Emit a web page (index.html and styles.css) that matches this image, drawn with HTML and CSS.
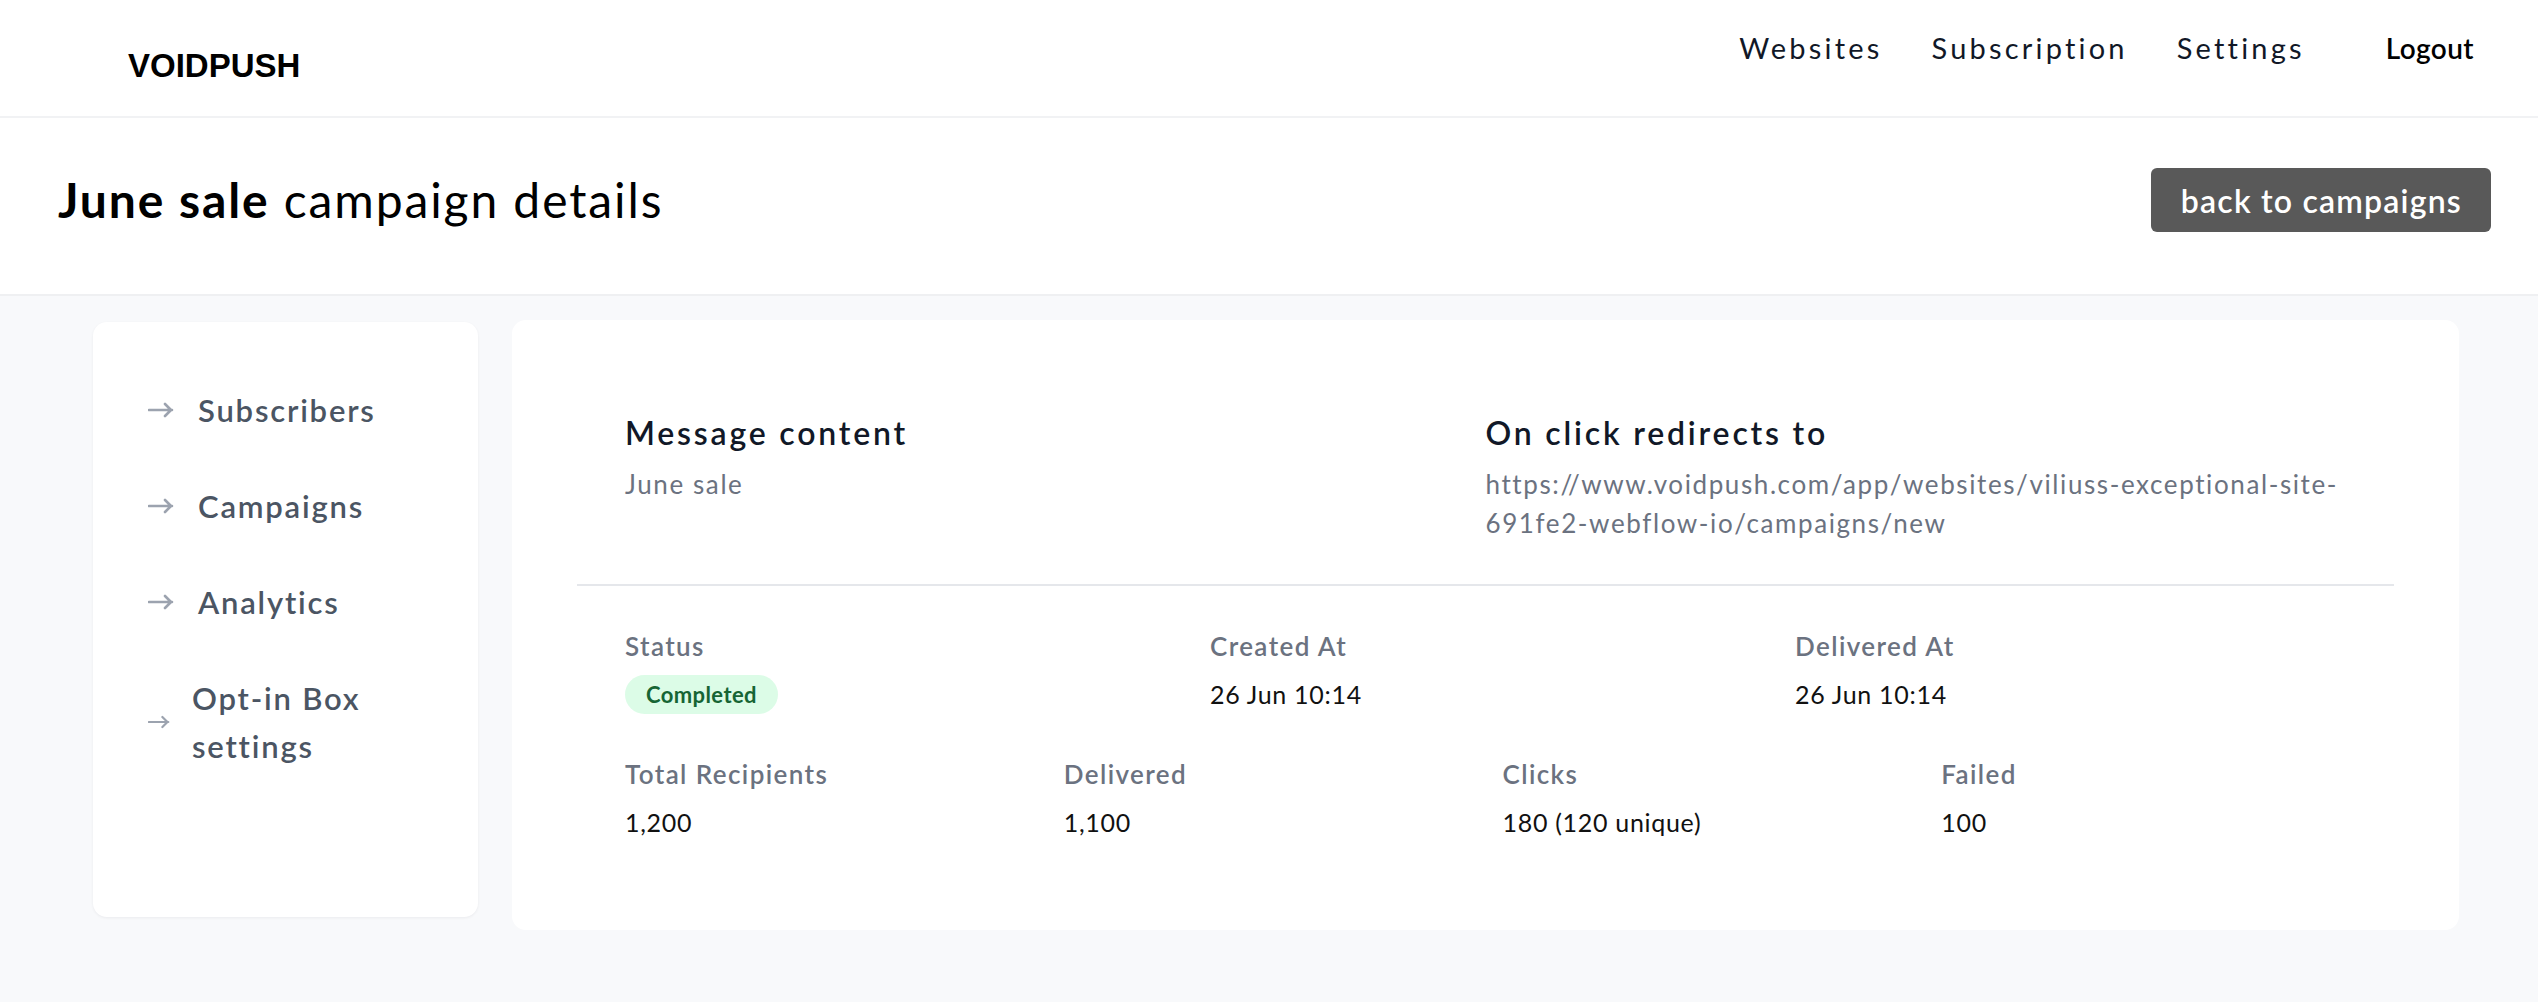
FILE: index.html
```html
<!DOCTYPE html>
<html lang="en">
<head>
<meta charset="utf-8">
<title>June sale campaign details - VOIDPUSH</title>
<link rel="stylesheet" href="styles.css">
</head>
<body>
<header class="topbar">
  <div class="logo">VOIDPUSH</div>
  <nav class="topnav">
    <a class="topnav-link">Websites</a>
    <a class="topnav-link">Subscription</a>
    <a class="topnav-link">Settings</a>
    <a class="topnav-logout">Logout</a>
  </nav>
</header>

<section class="titlebar">
  <h1 class="page-title"><strong>June sale</strong> campaign details</h1>
  <a class="btn-back">back to campaigns</a>
</section>

<main class="layout">
  <aside class="sidebar">
    <ul class="side-list">
      <li class="side-item">
        <svg class="side-arrow" viewBox="0 0 26 16" width="26" height="16"><path d="M1 8h23M17 2l6 6-6 6" fill="none" stroke="currentColor" stroke-width="2.6" stroke-linecap="round" stroke-linejoin="round"/></svg>
        <span class="side-text">Subscribers</span>
      </li>
      <li class="side-item">
        <svg class="side-arrow" viewBox="0 0 26 16" width="26" height="16"><path d="M1 8h23M17 2l6 6-6 6" fill="none" stroke="currentColor" stroke-width="2.6" stroke-linecap="round" stroke-linejoin="round"/></svg>
        <span class="side-text">Campaigns</span>
      </li>
      <li class="side-item">
        <svg class="side-arrow" viewBox="0 0 26 16" width="26" height="16"><path d="M1 8h23M17 2l6 6-6 6" fill="none" stroke="currentColor" stroke-width="2.6" stroke-linecap="round" stroke-linejoin="round"/></svg>
        <span class="side-text">Analytics</span>
      </li>
      <li class="side-item side-item-wrap">
        <svg class="side-arrow side-arrow-small" viewBox="0 0 26 16" width="22" height="14"><path d="M1 8h23M17 2l6 6-6 6" fill="none" stroke="currentColor" stroke-width="2.6" stroke-linecap="round" stroke-linejoin="round"/></svg>
        <span class="side-text">Opt-in Box settings</span>
      </li>
    </ul>
  </aside>

  <section class="card">
    <div class="card-top">
      <div class="info-block">
        <h2 class="info-title">Message content</h2>
        <p class="info-text">June sale</p>
      </div>
      <div class="info-block">
        <h2 class="info-title">On click redirects to</h2>
        <p class="info-text"><span class="url-line">https://www.voidpush.com/app/websites/viliuss-exceptional-site-</span><span class="url-line">691fe2-webflow-io/campaigns/new</span></p>
      </div>
    </div>
    <div class="card-stats">
      <div class="stats-row stats-row-3">
        <div class="stat">
          <div class="stat-label">Status</div>
          <div class="stat-value"><span class="badge">Completed</span></div>
        </div>
        <div class="stat">
          <div class="stat-label">Created At</div>
          <div class="stat-value">26 Jun 10:14</div>
        </div>
        <div class="stat">
          <div class="stat-label">Delivered At</div>
          <div class="stat-value">26 Jun 10:14</div>
        </div>
      </div>
      <div class="stats-row stats-row-4">
        <div class="stat">
          <div class="stat-label">Total Recipients</div>
          <div class="stat-value">1,200</div>
        </div>
        <div class="stat">
          <div class="stat-label">Delivered</div>
          <div class="stat-value">1,100</div>
        </div>
        <div class="stat">
          <div class="stat-label">Clicks</div>
          <div class="stat-value">180 (120 unique)</div>
        </div>
        <div class="stat">
          <div class="stat-label">Failed</div>
          <div class="stat-value">100</div>
        </div>
      </div>
    </div>
  </section>
</main>
</body>
</html>
```

FILE: styles.css
```css
* { box-sizing: border-box; }

html, body {
  margin: 0;
  padding: 0;
}

body {
  background: #f8f9fb;
  font-family: Lato, "Noto Sans", sans-serif;
  color: #111827;
  min-height: 1002px;
}

/* ---------- top bar ---------- */
.topbar {
  display: flex;
  justify-content: space-between;
  align-items: flex-start;
  height: 118px;
  background: #ffffff;
  border-bottom: 2px solid #f1f2f4;
  padding: 0 64px 0 128px;
}

.logo {
  font-family: "Liberation Sans", Arial, sans-serif;
  font-weight: 700;
  font-size: 33px;
  line-height: 40px;
  padding-top: 46px;
  color: #000;
}

.topnav {
  display: flex;
  align-items: center;
  padding-top: 28px;
}

.topnav-link {
  font-size: 29px;
  line-height: 40px;
  letter-spacing: 3.2px;
  color: #111827;
  margin-right: 49px;
}

.topnav-link:nth-child(3) {
  margin-right: 81px;
}

.topnav-logout {
  font-size: 28px;
  line-height: 40px;
  font-weight: 600;
  letter-spacing: 0.4px;
  color: #000;
}

/* ---------- title bar ---------- */
.titlebar {
  display: flex;
  justify-content: space-between;
  align-items: center;
  background: #ffffff;
  border-bottom: 2px solid #eff0f2;
  padding: 50px 47px 62px 58px;
}

.page-title {
  margin: 0;
  font-size: 48px;
  line-height: 56px;
  font-weight: 400;
  letter-spacing: 1.9px;
  color: #000;
}

.page-title strong {
  font-weight: 700;
}

.btn-back {
  display: flex;
  align-items: center;
  height: 64px;
  padding: 0 29px 0 30px;
  background: #595959;
  color: #ffffff;
  border-radius: 6px;
  font-size: 32px;
  font-weight: 600;
  letter-spacing: 1.2px;
}

/* ---------- layout ---------- */
.layout {
  display: flex;
  align-items: flex-start;
  gap: 34px;
  padding: 24px 79px 0 93px;
}

.sidebar {
  flex: 0 0 385px;
  height: 595px;
  margin-top: 2px;
  background: #ffffff;
  border-radius: 14px;
  box-shadow: 0 1px 3px rgba(17, 24, 39, 0.06);
  padding: 40px 30px 0 55px;
}

.side-list {
  list-style: none;
  margin: 0;
  padding: 0;
}

.side-item {
  display: flex;
  align-items: center;
  height: 96px;
  color: #4b5563;
}

.side-item-wrap {
  height: auto;
  padding: 24px 0;
}

.side-arrow {
  flex: 0 0 26px;
  color: #9ca3af;
  margin-right: 24px;
}

.side-arrow-small {
  flex: 0 0 22px;
  margin-right: 22px;
}

.side-text {
  font-size: 31px;
  line-height: 48px;
  font-weight: 600;
  letter-spacing: 1.8px;
  max-width: 240px;
}

/* ---------- card ---------- */
.card {
  flex: 1;
  background: #ffffff;
  border-radius: 14px;
  padding: 0 65px;
}

.card-top {
  display: grid;
  grid-template-columns: 1fr 1fr;
  padding: 93px 48px 41px;
  border-bottom: 2px solid #e5e7eb;
}

.info-title {
  margin: 0 0 12px;
  font-size: 32px;
  line-height: 40px;
  font-weight: 600;
  letter-spacing: 2.8px;
  color: #111827;
}

.info-text {
  margin: 0;
  font-size: 26px;
  line-height: 39px;
  letter-spacing: 1.6px;
  color: #6b7280;
}

.url-line {
  display: block;
  white-space: nowrap;
}

.card-stats {
  padding: 44px 48px 88px;
}

.stats-row {
  display: grid;
  column-gap: 34px;
}

.stats-row-3 {
  grid-template-columns: repeat(3, 1fr);
  margin-bottom: 44px;
}

.stats-row-4 {
  grid-template-columns: repeat(4, 1fr);
}

.stat-label {
  font-size: 26px;
  line-height: 32px;
  font-weight: 600;
  letter-spacing: 1.4px;
  color: #6b7280;
}

.stat-value {
  margin-top: 13px;
  font-size: 25px;
  line-height: 39px;
  letter-spacing: 0.7px;
  color: #111111;
}

.badge {
  display: inline-flex;
  align-items: center;
  height: 39px;
  padding: 0 21px;
  border-radius: 20px;
  background: #dcfce7;
  color: #166534;
  font-size: 22px;
  font-weight: 700;
  letter-spacing: 0.4px;
  vertical-align: top;
}
```
